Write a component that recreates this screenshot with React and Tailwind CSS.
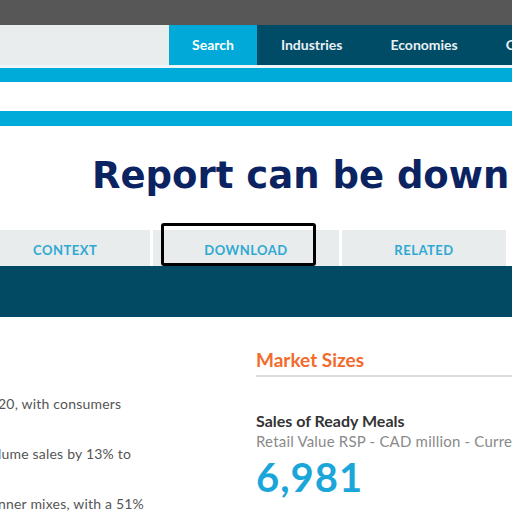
import React from 'react';

const navTabs = ['Industries', 'Economies', 'Consumers'];

const bullets = [
  '20, with consumers',
  'lume sales by 13% to',
  'nner mixes, with a 51%',
];

export default function App() {
  return (
    <div className="w-[512px] h-[512px] overflow-hidden bg-white whitespace-nowrap font-['Lato',sans-serif]">
      {/* Top strip */}
      <div className="h-[25px] bg-[#575757]" />

      {/* Main nav */}
      <div className="flex h-[40px]">
        <div className="w-[169px] shrink-0 bg-[#e9eded]" />
        <div className="flex items-center pb-[2px] px-[23px] bg-[#00a9d8] text-white text-[14px] font-bold">
          Search
        </div>
        <div className="flex flex-1 bg-[#004b66]">
          {navTabs.map((t) => (
            <div key={t} className="flex items-center pb-[2px] px-[24px] text-[#e8f1f4] text-[14px] font-bold">
              {t}
            </div>
          ))}
        </div>
      </div>

      {/* Cyan stripes */}
      <div className="h-[3px] bg-[#eef6f8]" />
      <div className="h-[14px] bg-[#00abd9]" />
      <div className="h-[29px] bg-white" />
      <div className="h-[15px] bg-[#00abd9]" />

      {/* Heading */}
      <h1 className="mt-[28px] pl-[92px] text-[37px] leading-[44px] font-bold text-[#0c2362] font-['DejaVu_Sans',sans-serif]">
        Report can be downloaded
      </h1>

      {/* Section tabs */}
      <div className="mt-[32px] flex gap-[3px] h-[36px] text-[13px] font-bold tracking-[0.5px] text-[#2fa9d3]">
        <div className="w-[150px] shrink-0 bg-[#e8eced] flex items-center pt-[5px] pl-[33px]">
          CONTEXT
        </div>
        <div className="relative w-[186px] shrink-0 bg-[#e8eced] flex items-center justify-center pt-[5px]">
          DOWNLOAD
          <div className="absolute left-[8px] top-[-7px] w-[155px] h-[43px] border-[3px] border-black rounded-[3px]" />
        </div>
        <div className="w-[164px] shrink-0 bg-[#e8eced] flex items-center justify-center pt-[5px]">
          RELATED
        </div>
      </div>

      {/* Teal band */}
      <div className="h-[51px] bg-[#024a63]" />

      {/* Content */}
      <div className="flex">
        <div className="w-[256px] shrink-0 overflow-hidden pt-[78px] flex flex-col gap-[32px]">
          {bullets.map((b) => (
            <p key={b} className="-ml-[2px] text-[14px] leading-[18px] tracking-[0.2px] text-[#555]">
              {b}
            </p>
          ))}
        </div>
        <div className="flex-1 pt-[31px]">
          <h2 className="text-[19px] leading-[24px] font-bold text-[#f26a2c] pb-[3px] border-b-2 border-[#dcdcdc]">
            Market Sizes
          </h2>
          <div className="mt-[34px] text-[16px] leading-[20px] font-bold text-[#333]">
            Sales of Ready Meals
          </div>
          <div className="text-[15px] leading-[20px] tracking-[0.2px] text-[#8a8a8a]">
            Retail Value RSP - CAD million - Current Prices
          </div>
          <div className="mt-[4px] text-[40px] leading-[44px] font-bold tracking-[1px] text-[#1ba6da]">
            6,981
          </div>
        </div>
      </div>
    </div>
  );
}
